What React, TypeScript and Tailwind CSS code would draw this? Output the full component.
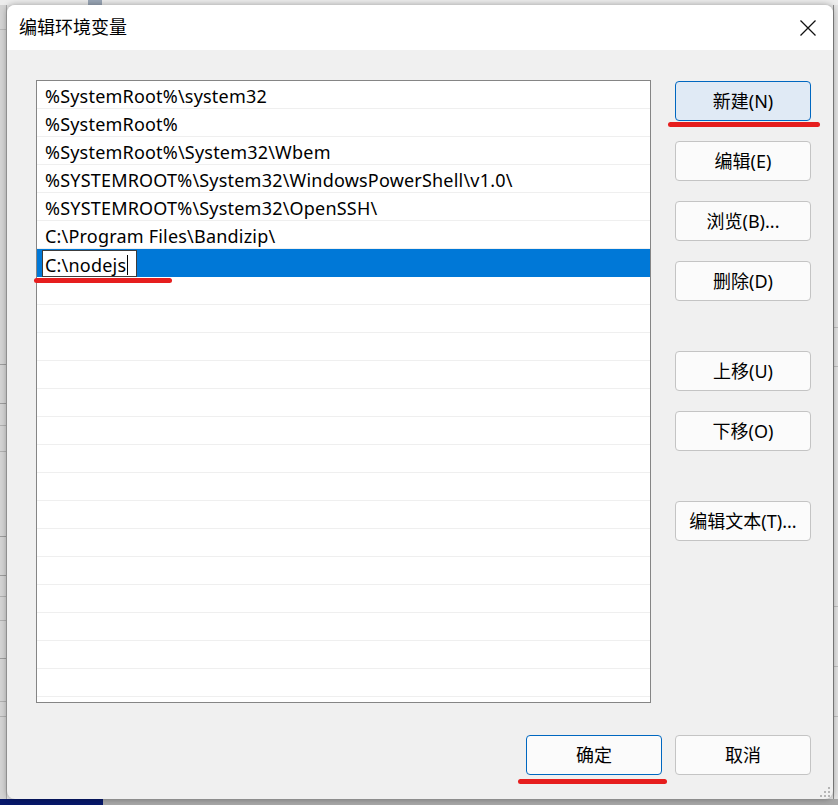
const paths = [
  '%SystemRoot%\\system32',
  '%SystemRoot%',
  '%SystemRoot%\\System32\\Wbem',
  '%SYSTEMROOT%\\System32\\WindowsPowerShell\\v1.0\\',
  '%SYSTEMROOT%\\System32\\OpenSSH\\',
  'C:\\Program Files\\Bandizip\\',
];

// gap above each button in the right column
const sideButtons = [
  { label: '新建(N)', gap: 'mt-0', primary: true },
  { label: '编辑(E)', gap: 'mt-[20px]' },
  { label: '浏览(B)...', gap: 'mt-[20px]' },
  { label: '删除(D)', gap: 'mt-[20px]' },
  { label: '上移(U)', gap: 'mt-[50px]' },
  { label: '下移(O)', gap: 'mt-[20px]' },
  { label: '编辑文本(T)...', gap: 'mt-[50px]' },
];

function WinButton({ label, primary, focus, className = '' }: { label: string; primary?: boolean; focus?: boolean; className?: string }) {
  return (
    <button
      className={`flex h-[40px] w-[136px] items-center justify-center rounded-[4px] border text-[18px] text-black ${
        primary
          ? 'border-[#0067c0] bg-[#e0eaf5]'
          : focus
          ? 'border-[#0067c0] bg-[#fbfbfb]'
          : 'border-[#c4c4c4] bg-[#fbfbfb]'
      } ${className}`}
    >
      {label}
    </button>
  );
}

export default function App() {
  const emptyRows = Array.from({ length: 16 });

  return (
    <div className="relative flex h-[805px] w-[838px] flex-col overflow-hidden bg-[#e6e6e6] font-['Noto_Sans','Noto_Sans_CJK_SC',sans-serif]">
      {/* top strip of the window behind */}
      <div className="flex h-[5px] shrink-0">
        <div className="w-[88px] bg-[#ececec]" />
        <div className="w-[14px] bg-[#9aa6b6]" />
        <div className="flex-1 bg-[#ececec]" />
      </div>

      <div className="flex h-[794px] shrink-0">
        {/* left strip */}
        <div className="flex w-[7px] flex-col border-r border-[#a9a9a9] bg-[#d3d3d3]">
          <div className="h-[25px] border-b border-[#b8b8b8]" />
          <div className="h-[335px] border-b border-[#9c9c9c]" />
          <div className="h-[39px] border-b border-[#9c9c9c]" />
          <div className="h-[22px] border-b border-[#b0b0b0]" />
          <div className="h-[26px] border-b border-[#b0b0b0]" />
          <div className="h-[85px] border-b border-[#9c9c9c]" />
          <div className="h-[39px] border-b border-[#9c9c9c]" />
          <div className="h-[21px] border-b border-[#b0b0b0]" />
          <div className="h-[24px] border-b border-[#b0b0b0]" />
          <div className="h-[38px] border-b border-[#9c9c9c]" />
          <div className="h-[43px] border-b border-[#b0b0b0]" />
          <div className="h-[15px] border-b border-[#b0b0b0]" />
          <div className="flex-1" />
        </div>

        {/* dialog */}
        <div className="relative flex w-[826px] flex-col overflow-hidden rounded-[8px] bg-[#f0f0f0] shadow-[0_0_6px_rgba(0,0,0,0.35)]">
          <div className="flex h-[45px] shrink-0 items-center justify-between bg-white pl-[12px] pr-[17px]">
            <span className="text-[18px] text-black">编辑环境变量</span>
            <svg width="16" height="16" viewBox="0 0 16 16" className="mt-px">
              <path d="M0.5 0.5 L15.5 15.5 M15.5 0.5 L0.5 15.5" stroke="#111" strokeWidth="1.3" />
            </svg>
          </div>

          <div className="flex gap-[24px] pl-[29px] pt-[30px]">
            {/* list */}
            <div className="flex h-[623px] w-[615px] flex-col overflow-hidden border border-[#858585] bg-white text-[18px] tracking-[0.2px] text-black">
              {paths.map((p) => (
                <div key={p} className="flex h-[28px] shrink-0 items-center border-b border-[#efefef] pl-[8px] pt-[2px] leading-none">
                  {p}
                </div>
              ))}
              <div className="flex h-[28px] shrink-0 items-start bg-[#0078d7] pl-[5px] pt-px">
                <div className="flex h-[27px] w-[95px] items-center border border-[#3c3c3c] bg-white pl-[2px] pt-[2px] leading-none">
                  C:\nodejs
                  <span className="ml-[1px] h-[20px] w-px bg-black" />
                </div>
              </div>
              {emptyRows.map((_, i) => (
                <div key={i} className="h-[28px] shrink-0 border-b border-[#efefef]" />
              ))}
            </div>

            {/* side buttons */}
            <div className="mt-px flex flex-col">
              {sideButtons.map((b) => (
                <WinButton key={b.label} label={b.label} primary={b.primary} className={b.gap} />
              ))}
            </div>
          </div>

          <div className="mt-[32px] flex justify-end gap-[13px] pr-[22px]">
            <WinButton label="确定" focus />
            <WinButton label="取消" />
          </div>

          {/* resize grip */}
          <svg className="absolute bottom-[2px] right-[3px]" width="10" height="10" viewBox="0 0 10 10">
            <rect x="8" y="0" width="2" height="2" fill="#b5b5b5" />
            <rect x="4" y="4" width="2" height="2" fill="#b5b5b5" />
            <rect x="8" y="4" width="2" height="2" fill="#b5b5b5" />
            <rect x="0" y="8" width="2" height="2" fill="#b5b5b5" />
            <rect x="4" y="8" width="2" height="2" fill="#b5b5b5" />
            <rect x="8" y="8" width="2" height="2" fill="#b5b5b5" />
          </svg>
        </div>

        {/* right strip */}
        <div className="flex flex-1 flex-col border-l border-[#8a8a8a] bg-[#e2e2e2]">
          <div className="h-[323px] border-b border-[#bdbdbd]" />
          <div className="h-[39px] border-b border-[#bdbdbd]" />
          <div className="h-[240px] border-b border-[#bdbdbd]" />
          <div className="h-[60px] border-b border-[#bdbdbd]" />
          <div className="h-[50px] border-b border-[#bdbdbd]" />
          <div className="flex-1" />
        </div>
      </div>

      {/* bottom strip */}
      <div className="flex flex-1">
        <div className="w-[103px] bg-[#07186a]" />
        <div className="flex-1 bg-[#a7a7a7]" />
      </div>

      {/* red annotation strokes */}
      <div className="absolute left-[34px] top-[278px] h-[5px] w-[138px] rounded-full bg-[#e61e1e]" />
      <div className="absolute left-[668px] top-[122px] h-[5px] w-[152px] rounded-full bg-[#e61e1e]" />
      <div className="absolute left-[518px] top-[779px] h-[5px] w-[149px] rounded-full bg-[#e61e1e]" />
    </div>
  );
}
